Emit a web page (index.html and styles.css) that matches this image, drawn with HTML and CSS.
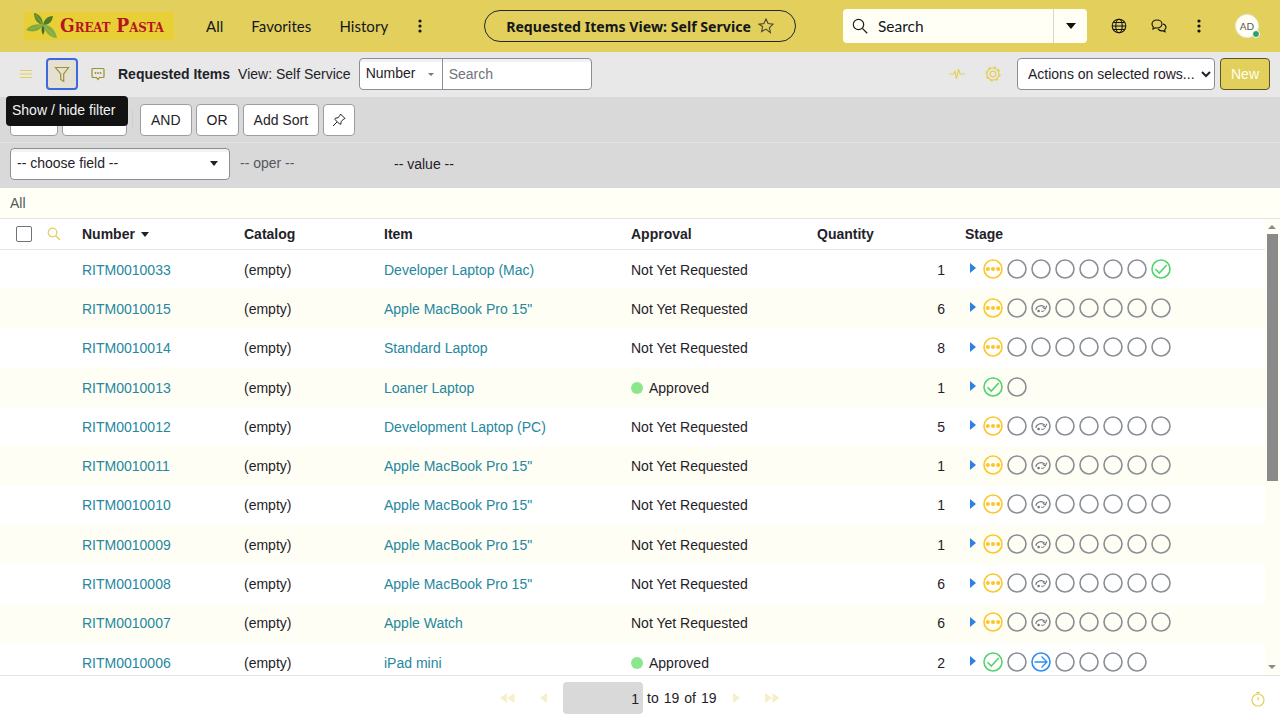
FILE: index.html
```html
<!DOCTYPE html>
<html lang="en">
<head>
<meta charset="utf-8">
<title>Requested Items</title>
<link rel="stylesheet" href="styles.css">
</head>
<body>
<svg class="defs" width="0" height="0" aria-hidden="true">
  <symbol id="o" viewBox="0 0 20 20"><circle cx="10" cy="10" r="9" fill="none" stroke="#8a8e96" stroke-width="1.6"/></symbol>
  <symbol id="d" viewBox="0 0 20 20"><circle cx="10" cy="10" r="9" fill="none" stroke="#fcc62d" stroke-width="1.6"/><circle cx="4.800" cy="10" r="2.100" fill="#fcc62d"/><circle cx="10" cy="10" r="2.100" fill="#fcc62d"/><circle cx="15.200" cy="10" r="2.100" fill="#fcc62d"/></symbol>
  <symbol id="c" viewBox="0 0 20 20"><circle cx="10" cy="10" r="9" fill="none" stroke="#4fd46c" stroke-width="1.6"/><path d="M4.500 10.200l3.800 3.800 7.400-8" fill="none" stroke="#4fd46c" stroke-width="1.6"/></symbol>
  <symbol id="g" viewBox="0 0 20 20"><circle cx="10" cy="10" r="9" fill="none" stroke="#8a8e96" stroke-width="1.6"/><path d="M4.800 11.800c.6-3.800 5.600-5.600 9-2.600M15.800 7.800l-1.500 3.200-2.600-1.600" fill="none" stroke="#6f737b" stroke-width="1.100"/><circle cx="7.600" cy="13" r="1.300" fill="#6f737b"/><path d="M10.200 13.200c1.200.4 2.400.1 3.400-.8" fill="none" stroke="#6f737b" stroke-width="1"/></symbol>
  <symbol id="a" viewBox="0 0 20 20"><circle cx="10" cy="10" r="9" fill="none" stroke="#2d8cf0" stroke-width="1.6"/><path d="M3.500 10h12.500M10.500 4.500l5.500 5.500-5.500 5.500" fill="none" stroke="#2d8cf0" stroke-width="1.3"/></symbol>
  <symbol id="t" viewBox="0 0 6 10"><path d="M0 0l6 5-6 5z" fill="#2f80e4"/></symbol>
</svg>

<div class="app">
  <header class="topbar">
    <a class="logo">
      <svg class="leaf" width="36" height="28" viewBox="0 0 36 28"><path d="M2 18c4-5 10-7 17-5-3 6-10 8-17 5z" fill="#7ea83c"/><path d="M10 1c6 1 9 6 9 12C13 12 10 7 10 1z" fill="#5c8c2c"/><path d="M29 4c-6 0-9 4-10 9 6 0 9-3 10-9z" fill="#4d7d28"/><path d="M19 13c6-1 12 4 14 13-7 0-12-6-14-13z" fill="#86ad42"/><path d="M19 13c-2 3-2 6 0 10 2-3 2-7 0-10z" fill="#3f6f25"/><path d="M19 13l11 11M19 13l-13 4M19 13l-7-10" stroke="#a9c464" stroke-width=".5" fill="none"/></svg>
      <span class="logo-text">Great Pasta</span>
    </a>
    <nav class="mainnav">
      <span>All</span><span>Favorites</span><span>History</span>
      <svg width="4" height="14" viewBox="0 0 4 14"><circle cx="2" cy="2" r="1.6"/><circle cx="2" cy="7" r="1.6"/><circle cx="2" cy="12" r="1.6"/></svg>
    </nav>
    <div class="pill">
      <span>Requested Items View: Self Service</span>
      <svg width="16" height="16" viewBox="0 0 16 16"><path d="M8 1l2.100 4.600 5 .6-3.700 3.400 1 5L8 11.100l-4.400 2.500 1-5L.9 6.200l5-.6z" fill="none" stroke="#4a4630" stroke-width="1.100"/></svg>
    </div>
    <div class="gsearch">
      <svg width="16" height="16" viewBox="0 0 16 16"><circle cx="6.500" cy="6.500" r="5.200" fill="none" stroke="#1d1d1d" stroke-width="1.200"/><path d="M10.400 10.400l4.800 4.800" stroke="#1d1d1d" stroke-width="1.300"/></svg>
      <span class="gsearch-text">Search</span>
      <span class="gsearch-drop"><i class="caret-lg"></i></span>
    </div>
    <div class="topicons">
      <svg width="16" height="16" viewBox="0 0 16 16" fill="none" stroke="#111" stroke-width="1.100"><circle cx="8" cy="8" r="6.800"/><ellipse cx="8" cy="8" rx="3.200" ry="6.800"/><path d="M1.200 8h13.600M2.200 4.500h11.600M2.200 11.500h11.600"/></svg>
      <svg width="16" height="16" viewBox="0 0 16 16" fill="none" stroke="#111" stroke-width="1.100"><path d="M6 2C3 2 1 3.800 1 6c0 1.200.5 2.100 1.300 2.800L2 11l2.300-1.200C5 10 5.500 10 6 10c3 0 5-1.800 5-4S9 2 6 2z"/><path d="M12 6c1.800.5 3 1.800 3 3.300 0 1-.5 1.800-1.200 2.400l.2 2-2-1c-2 .4-4-.3-5-1.800"/></svg>
      <svg width="4" height="14" viewBox="0 0 4 14"><circle cx="2" cy="2" r="1.600"/><circle cx="2" cy="7" r="1.600"/><circle cx="2" cy="12" r="1.600"/></svg>
      <span class="avatar">AD<i class="presence"></i></span>
    </div>
  </header>

  <section class="toolbar">
    <svg class="tb-menu" width="14" height="10" viewBox="0 0 14 10"><path d="M1 1.500h12M1 5h12M1 8.500h12" stroke="#e3cf5b" stroke-width="1.100"/></svg>
    <button class="filter-btn" type="button"><svg width="16" height="17" viewBox="0 0 16 17"><path d="M1.500 1.500h13L9.700 8v7.500l-3-2V8z" fill="none" stroke="#a08f2d" stroke-width="1.200"/></svg></button>
    <svg class="tb-chat" width="14" height="14" viewBox="0 0 14 14"><path d="M2 1.500h10a1 1 0 0 1 1 1v7a1 1 0 0 1-1 1H8.500L7 12.500 5.500 10.500H2a1 1 0 0 1-1-1v-7a1 1 0 0 1 1-1z" fill="none" stroke="#a08f2d" stroke-width="1.200"/><circle cx="4.500" cy="6" r=".9" fill="#a08f2d"/><circle cx="7" cy="6" r=".9" fill="#a08f2d"/><circle cx="9.500" cy="6" r=".9" fill="#a08f2d"/></svg>
    <strong class="tb-title">Requested Items</strong>
    <span class="tb-view">View: Self Service</span>
    <div class="searchgroup">
      <span class="sg-field">Number<i class="caret-sm"></i></span>
      <span class="sg-input">Search</span>
    </div>
    <div class="tb-right">
      <svg class="tb-pulse" width="16" height="14" viewBox="0 0 16 14"><path d="M0 7h4.500l1.500-2.500 1.500 7.500L9.500 2l1.500 5h5" fill="none" stroke="#e3cf5b" stroke-width="1.200"/></svg>
      <svg class="tb-gear" width="16" height="16" viewBox="0 0 16 16" fill="none" stroke="#e3cf5b"><circle cx="8" cy="8" r="2.800" stroke-width="1.200"/><circle cx="8" cy="8" r="6" stroke-width="1.200"/><circle cx="8" cy="8" r="7" stroke-width="1.200" stroke-dasharray="2.800 2.700"/></svg>
      <select class="actions"><option>Actions on selected rows...</option></select>
      <button class="new-btn" type="button">New</button>
    </div>
  </section>

  <section class="filter-a">
    <span class="btn b1"></span><span class="btn b2"></span><span class="sep"></span>
    <span class="btn">AND</span><span class="btn">OR</span><span class="btn">Add Sort</span>
    <span class="btn pin"><svg width="14" height="14" viewBox="0 0 14 14"><path d="M8.500 1l4.500 4.500-1.300.5-2.500 2.500-.4 2.700L7.500 11 3 6.500l.3-1.300 2.700-.4L8 2.300zM5 9l-4 4" fill="none" stroke="#222" stroke-width="1"/></svg></span>
  </section>
  <section class="filter-b">
    <span class="fieldsel">-- choose field --<i class="caret-md"></i></span>
    <span class="oper">-- oper --</span>
    <span class="value">-- value --</span>
  </section>
  <div class="crumb">All</div>

  <div class="listwrap">
    <div class="list">
      <div class="row head">
        <span class="cb"></span>
        <svg class="listsearch" width="14" height="14" viewBox="0 0 14 14"><circle cx="5.500" cy="5.500" r="4.300" fill="none" stroke="#e3cf5b" stroke-width="1.200"/><path d="M8.700 8.700l4.300 4.300" stroke="#e3cf5b" stroke-width="1.400"/></svg>
        <span>Number <i class="caret-sort"></i></span><span>Catalog</span><span>Item</span><span>Approval</span><span>Quantity</span><span class="stagehead">Stage</span>
      </div>

      <div class="row"><i></i><i></i><a>RITM0010033</a><span>(empty)</span><a>Developer Laptop (Mac)</a><span>Not Yet Requested</span><span class="qty">1</span><span class="stage"><svg class="tri"><use href="#t"/></svg><svg><use href="#d"/></svg><svg><use href="#o"/></svg><svg><use href="#o"/></svg><svg><use href="#o"/></svg><svg><use href="#o"/></svg><svg><use href="#o"/></svg><svg><use href="#o"/></svg><svg><use href="#c"/></svg></span></div>
      <div class="row alt"><i></i><i></i><a>RITM0010015</a><span>(empty)</span><a>Apple MacBook Pro 15"</a><span>Not Yet Requested</span><span class="qty">6</span><span class="stage"><svg class="tri"><use href="#t"/></svg><svg><use href="#d"/></svg><svg><use href="#o"/></svg><svg><use href="#g"/></svg><svg><use href="#o"/></svg><svg><use href="#o"/></svg><svg><use href="#o"/></svg><svg><use href="#o"/></svg><svg><use href="#o"/></svg></span></div>
      <div class="row"><i></i><i></i><a>RITM0010014</a><span>(empty)</span><a>Standard Laptop</a><span>Not Yet Requested</span><span class="qty">8</span><span class="stage"><svg class="tri"><use href="#t"/></svg><svg><use href="#d"/></svg><svg><use href="#o"/></svg><svg><use href="#o"/></svg><svg><use href="#o"/></svg><svg><use href="#o"/></svg><svg><use href="#o"/></svg><svg><use href="#o"/></svg><svg><use href="#o"/></svg></span></div>
      <div class="row alt"><i></i><i></i><a>RITM0010013</a><span>(empty)</span><a>Loaner Laptop</a><span class="appr"><i class="dot"></i>Approved</span><span class="qty">1</span><span class="stage"><svg class="tri"><use href="#t"/></svg><svg><use href="#c"/></svg><svg><use href="#o"/></svg></span></div>
      <div class="row"><i></i><i></i><a>RITM0010012</a><span>(empty)</span><a>Development Laptop (PC)</a><span>Not Yet Requested</span><span class="qty">5</span><span class="stage"><svg class="tri"><use href="#t"/></svg><svg><use href="#d"/></svg><svg><use href="#o"/></svg><svg><use href="#g"/></svg><svg><use href="#o"/></svg><svg><use href="#o"/></svg><svg><use href="#o"/></svg><svg><use href="#o"/></svg><svg><use href="#o"/></svg></span></div>
      <div class="row alt"><i></i><i></i><a>RITM0010011</a><span>(empty)</span><a>Apple MacBook Pro 15"</a><span>Not Yet Requested</span><span class="qty">1</span><span class="stage"><svg class="tri"><use href="#t"/></svg><svg><use href="#d"/></svg><svg><use href="#o"/></svg><svg><use href="#g"/></svg><svg><use href="#o"/></svg><svg><use href="#o"/></svg><svg><use href="#o"/></svg><svg><use href="#o"/></svg><svg><use href="#o"/></svg></span></div>
      <div class="row"><i></i><i></i><a>RITM0010010</a><span>(empty)</span><a>Apple MacBook Pro 15"</a><span>Not Yet Requested</span><span class="qty">1</span><span class="stage"><svg class="tri"><use href="#t"/></svg><svg><use href="#d"/></svg><svg><use href="#o"/></svg><svg><use href="#g"/></svg><svg><use href="#o"/></svg><svg><use href="#o"/></svg><svg><use href="#o"/></svg><svg><use href="#o"/></svg><svg><use href="#o"/></svg></span></div>
      <div class="row alt"><i></i><i></i><a>RITM0010009</a><span>(empty)</span><a>Apple MacBook Pro 15"</a><span>Not Yet Requested</span><span class="qty">1</span><span class="stage"><svg class="tri"><use href="#t"/></svg><svg><use href="#d"/></svg><svg><use href="#o"/></svg><svg><use href="#g"/></svg><svg><use href="#o"/></svg><svg><use href="#o"/></svg><svg><use href="#o"/></svg><svg><use href="#o"/></svg><svg><use href="#o"/></svg></span></div>
      <div class="row"><i></i><i></i><a>RITM0010008</a><span>(empty)</span><a>Apple MacBook Pro 15"</a><span>Not Yet Requested</span><span class="qty">6</span><span class="stage"><svg class="tri"><use href="#t"/></svg><svg><use href="#d"/></svg><svg><use href="#o"/></svg><svg><use href="#g"/></svg><svg><use href="#o"/></svg><svg><use href="#o"/></svg><svg><use href="#o"/></svg><svg><use href="#o"/></svg><svg><use href="#o"/></svg></span></div>
      <div class="row alt"><i></i><i></i><a>RITM0010007</a><span>(empty)</span><a>Apple Watch</a><span>Not Yet Requested</span><span class="qty">6</span><span class="stage"><svg class="tri"><use href="#t"/></svg><svg><use href="#d"/></svg><svg><use href="#o"/></svg><svg><use href="#g"/></svg><svg><use href="#o"/></svg><svg><use href="#o"/></svg><svg><use href="#o"/></svg><svg><use href="#o"/></svg><svg><use href="#o"/></svg></span></div>
      <div class="row"><i></i><i></i><a>RITM0010006</a><span>(empty)</span><a>iPad mini</a><span class="appr"><i class="dot"></i>Approved</span><span class="qty">2</span><span class="stage"><svg class="tri"><use href="#t"/></svg><svg><use href="#c"/></svg><svg><use href="#o"/></svg><svg><use href="#a"/></svg><svg><use href="#o"/></svg><svg><use href="#o"/></svg><svg><use href="#o"/></svg><svg><use href="#o"/></svg></span></div>
    </div>
    <div class="scrollbar">
      <i class="sb-up"></i>
      <div class="sb-track"><div class="sb-thumb"></div></div>
      <i class="sb-down"></i>
    </div>
  </div>

  <footer class="pager">
    <div class="pager-main">
      <svg class="pg first" width="15" height="10" viewBox="0 0 15 10"><path d="M7 0v10L0 5zM14.500 0v10l-7-5z"/></svg>
      <svg class="pg prev" width="7" height="10" viewBox="0 0 7 10"><path d="M7 0v10L0 5z"/></svg>
      <span class="pageinput">1</span>
      <span class="pagetext">to</span><span class="pagetext">19</span><span class="pagetext">of</span><span class="pagetext">19</span>
      <svg class="pg next" width="7" height="10" viewBox="0 0 7 10"><path d="M0 0v10l7-5z"/></svg>
      <svg class="pg last" width="15" height="10" viewBox="0 0 15 10"><path d="M0 0v10l7-5zM7.500 0v10l7-5z"/></svg>
    </div>
    <svg class="timer" width="14" height="16" viewBox="0 0 14 16" fill="none" stroke="#e3cf5b" stroke-width="1.200"><circle cx="7" cy="9" r="6"/><path d="M5 1.500h4M7 1.500V3M7 6v3.500"/></svg>
  </footer>

  <div class="tooltip">Show / hide filter</div>
</div>
</body>
</html>
```
FILE: styles.css
```css
* { box-sizing: border-box; }
html, body { margin: 0; height: 718px; overflow: hidden; background: #fff; }
body { font-family: "Liberation Sans", Arial, sans-serif; font-size: 14px; color: #1f2229; }
.defs { position: absolute; }
.app { position: relative; width: 1280px; height: 718px; display: flex; flex-direction: column; overflow: hidden; }

.topbar { flex: 0 0 52px; background: #e3cf5b; display: flex; align-items: center; font-family: Lato, "Noto Sans", sans-serif; font-size: 15px; color: #14171c; }
.logo { width: 150px; height: 28px; margin-left: 24px; background: #e8cf37; display: flex; align-items: center; }
.leaf { flex: none; }
.logo-text { font-family: "DejaVu Serif Condensed", "DejaVu Serif", serif; font-weight: 700; font-variant: small-caps; font-size: 19.100px; color: #b5161e; white-space: nowrap; line-height: 28px; }
.mainnav { display: flex; align-items: center; margin-left: 32px; width: 278px; }
.mainnav span { margin-right: 28px; letter-spacing: .05px; }
.mainnav svg { margin-left: 2px; fill: #14171c; }
.pill { width: 312px; height: 32px; border: 1px solid #23262b; border-radius: 16px; display: flex; align-items: center; justify-content: center; gap: 7px; font-family: "Noto Sans", sans-serif; font-weight: 700; font-size: 14.150px; }
.gsearch { width: 244px; height: 34px; margin-left: 47px; background: #fffff5; border-radius: 4px; display: flex; align-items: center; padding-left: 9px; }
.gsearch-text { margin-left: 10px; flex: 1; font-size: 15.500px; }
.gsearch-drop { width: 34px; height: 34px; border-left: 1px solid #d8d8d0; display: flex; align-items: center; justify-content: center; }
.caret-lg { border-left: 5.500px solid transparent; border-right: 5.500px solid transparent; border-top: 6px solid #111; }
.topicons { display: flex; align-items: center; margin-left: 24px; position: relative; }
.topicons svg:nth-child(1) { margin-right: 24px; }
.topicons svg:nth-child(2) { margin-right: 30px; }
.topicons svg:nth-child(3) { margin-right: 34px; fill: #111; }
.avatar { position: relative; width: 24px; height: 24px; border-radius: 50%; background: #fffff5; border: 1px solid #e8e8e0; font-family: Lato, sans-serif; font-size: 10px; color: #555; display: flex; align-items: center; justify-content: center; }
.presence { position: absolute; right: -2px; bottom: -1px; width: 8px; height: 8px; border-radius: 50%; background: #2e9e6a; border: 1px solid #fff; }

.toolbar { flex: 0 0 45px; background: #e8e8e8; display: flex; align-items: center; padding-bottom: 1px; }
.tb-menu { margin-left: 19px; }
.filter-btn { width: 32px; height: 32px; margin-left: 13px; padding: 0; background: #e4e0d4; border: 2px solid #3f68e0; border-radius: 4px; display: flex; align-items: center; justify-content: center; }
.tb-chat { margin-left: 13px; }
.tb-title { margin-left: 13px; }
.tb-view { margin-left: 8px; }
.searchgroup { display: flex; margin-left: 8px; height: 32px; background: #fff; border: 1px solid #8a8e96; border-radius: 4px; box-shadow: inset 0 3px 0 #f2f2f2; }
.sg-field { width: 83px; padding: 6px 0 0 6px; border-right: 1px solid #8a8e96; position: relative; }
.caret-sm { position: absolute; right: 8px; top: 14px; border-left: 3px solid transparent; border-right: 3px solid transparent; border-top: 3.500px solid #777; }
.sg-input { width: 148px; padding: 7px 0 0 6px; color: #6f7379; }
.tb-right { margin-left: auto; padding-right: 10px; display: flex; align-items: center; }
.tb-gear { margin-left: 20px; }
.actions { width: 198px; height: 32px; margin-left: 16px; padding: 0 0 0 6px; font: 14px "Liberation Sans", sans-serif; color: #1f2229; background: #fff; border: 1px solid #8a8e96; border-radius: 4px; }
.new-btn { width: 50px; height: 32px; margin-left: 5px; padding: 0; background: #e3cf5b; border: 1px solid #5c5426; border-radius: 4px; color: #fffff0; font: 14px "Liberation Sans", sans-serif; }

.filter-a { flex: 0 0 46px; background: #d9d9d9; display: flex; align-items: flex-start; gap: 4px; padding: 7px 0 0 10px; border-bottom: 1px solid #e4e4e4; }
.btn { height: 32px; padding: 0 10px; background: #fff; border: 1px solid #9a9da3; border-radius: 4px; display: flex; align-items: center; justify-content: center; }
.b1 { width: 48px; }
.b2 { width: 65px; }
.sep { width: 1px; height: 20px; margin: 5px 3px 0 1px; background: #cfcfcf; }
.pin { width: 32px; padding: 0; }

.filter-b { flex: 0 0 45px; background: #d9d9d9; display: flex; align-items: flex-start; padding: 5px 0 0 10px; }
.fieldsel { width: 220px; height: 32px; background: #fff; border: 1px solid #8a8e96; border-radius: 4px; box-shadow: inset 0 3px 0 #f2f2f2; padding: 6px 0 0 6px; position: relative; }
.caret-md { position: absolute; right: 11px; top: 12px; border-left: 4.500px solid transparent; border-right: 4.500px solid transparent; border-top: 5px solid #222; }
.oper { margin: 7px 0 0 10px; width: 154px; color: #55585e; }
.value { margin-top: 8px; }

.crumb { flex: 0 0 31px; background: #fffff5; border-bottom: 1px solid #e4e4e8; padding: 7px 0 0 10px; color: #55585e; }

.listwrap { flex: 1; min-height: 0; display: flex; overflow: hidden; border-bottom: 1px solid #e4e4e4; }
.list { flex: 1; min-width: 0; overflow: hidden; }
.row { display: grid; grid-template-columns: 47px 35px 162px 140px 247px 186px 128px 1fr; align-items: center; height: 39.300px; }
.row > :nth-child(n) { white-space: nowrap; }
.row.alt { background: #fefef5; }
.row a { color: #26879e; }
.row.head { height: 31px; font-weight: 700; border-bottom: 1px solid #e4e4e8; background: #fff; }
.cb { width: 16px; height: 16px; margin-left: 16px; background: #fff; border: 1px solid #6f737b; border-radius: 2px; }
.caret-sort { display: inline-block; margin-left: 2px; vertical-align: 2px; border-left: 4.500px solid transparent; border-right: 4.500px solid transparent; border-top: 5px solid #1f2229; }
.stagehead { padding-left: 20px; }
.appr { display: flex; align-items: center; }
.dot { width: 12px; height: 12px; margin-right: 6px; border-radius: 50%; background: #8ce68c; }
.qty { text-align: right; }
.stage { display: flex; align-items: center; gap: 4px; padding-left: 25px; margin-top: -2px; }
.stage svg { width: 20px; height: 20px; flex: none; }
.stage svg.tri { width: 6px; height: 10px; margin-right: 3px; margin-top: -1px; }

.scrollbar { flex: 0 0 15px; background: #fefef5; display: flex; flex-direction: column; align-items: center; padding-right: 1px; }
.sb-up { margin-top: 6px; border-left: 4px solid transparent; border-right: 4px solid transparent; border-bottom: 4px solid #8a8a8a; }
.sb-track { flex: 1; width: 11px; margin-top: 5px; }
.sb-thumb { width: 100%; height: 247px; background: #8a8a8a; }
.sb-down { margin: 0 0 6px; border-left: 4px solid transparent; border-right: 4px solid transparent; border-top: 4px solid #8a8a8a; }

.pager { flex: 0 0 42px; padding-top: 2px; background: #fff; display: flex; align-items: center; position: relative; }
.pager-main { display: flex; align-items: center; margin-left: 500px; }
.pg { fill: #f6efc8; }
.prev { margin-left: 25px; }
.pageinput { width: 80px; height: 32px; margin: 0 4px 0 16px; padding: 9px 4px 0 0; background: #d9d9d9; border-radius: 4px; text-align: right; }
.pagetext { margin-right: 5px; }
.next { margin-left: 11px; }
.last { margin-left: 25px; }
.timer { margin-left: auto; margin-right: 15px; margin-top: 1px; }

.tooltip { position: absolute; left: 6px; top: 96px; width: 122px; height: 30px; padding: 6px 0 0 6px; background: #121212; border-radius: 4px; color: #f2f2f2; }
```
